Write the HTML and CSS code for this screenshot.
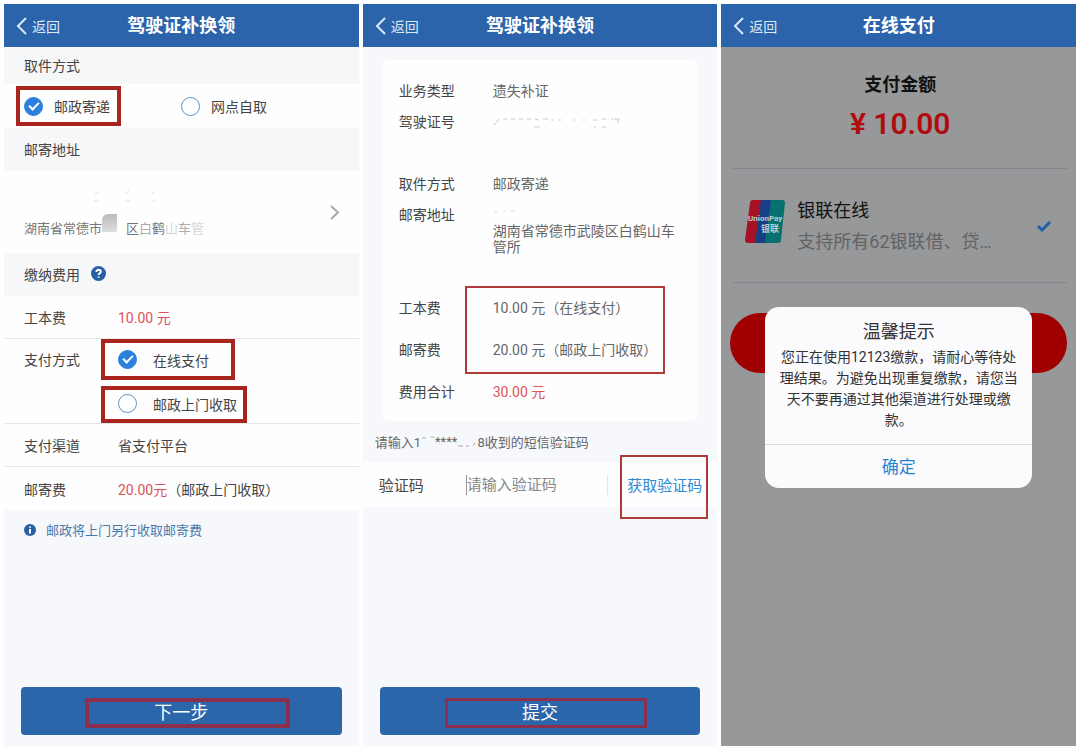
FILE: index.html
```html
<!DOCTYPE html>
<html lang="zh-CN">
<head>
    <meta charset="UTF-8">
    <meta name="viewport" content="width=device-width, initial-scale=1.0">
    <title>驾驶证补换领</title>
    <link rel="stylesheet" href="styles.css">
</head>
<body>
    <main class="screens">

        <!-- 第一步：取件方式与费用 -->
        <section class="screen">
            <header class="topbar">
                <a class="back" href="#">
                    <svg class="back-icon" viewBox="0 0 11 18"><path d="M10 1 2 9l8 8"/></svg>返回
                </a>
                <h1>驾驶证补换领</h1>
            </header>
            <h2 class="group-title first">取件方式</h2>
            <div class="pickup">
                <label class="option marked">
                    <input type="radio" name="pickup" checked>邮政寄递
                </label>
                <label class="option">
                    <input type="radio" name="pickup">网点自取
                </label>
            </div>
            <h2 class="group-title">邮寄地址</h2>
            <a class="address" href="#">
                <span class="address-text">
                    <svg class="hidden-name" viewBox="0 0 150 20">
                        <path d="M71 6h4M70 14h5M102 6l3-2M101 14h5M128 6h2M129 14h2M2 13h1"/>
                    </svg>
                    <span class="address-line">湖南省常德市<i class="smudge"></i>区<span class="faint">白</span>鹤<span class="fainter">山</span><span class="faint">车</span><span class="fainter">管</span></span>
                </span>
                <svg class="arrow" viewBox="0 0 9 15"><path d="M1 1l7 6.500-7 6.500"/></svg>
            </a>
            <h2 class="group-title">缴纳费用
                <svg class="help-icon" viewBox="0 0 15 15">
                    <circle cx="7.500" cy="7.500" r="7.500"/>
                    <path d="M5.400 6c0-1.300.9-2.200 2.200-2.200S9.800 4.600 9.800 5.700c0 1.500-2.200 1.600-2.200 3.300M7.600 10.400v1.400"/>
                </svg>
            </h2>
            <div class="row">
                <span>工本费</span>
                <span class="price">10.00 元</span>
            </div>
            <div class="row pay-row">
                <span class="pay-label">支付方式</span>
                <div class="pay-options">
                    <label class="option marked wide">
                        <input type="radio" name="pay" checked>在线支付
                    </label>
                    <label class="option marked">
                        <input type="radio" name="pay">邮政上门收取
                    </label>
                </div>
            </div>
            <div class="row">
                <span>支付渠道</span>
                <span>省支付平台</span>
            </div>
            <div class="row last">
                <span>邮寄费</span>
                <span><span class="price">20.00元</span>（邮政上门收取）</span>
            </div>
            <p class="note">
                <svg class="info-icon" viewBox="0 0 12 12">
                    <circle cx="6" cy="6" r="6"/>
                    <path d="M6 2.500v1.300M6 5v4.500"/>
                </svg>邮政将上门另行收取邮寄费
            </p>
            <button class="submit" type="button"><span class="frame thick">下一步</span></button>
        </section>

        <!-- 第二步：确认并提交 -->
        <section class="screen">
            <header class="topbar">
                <a class="back" href="#">
                    <svg class="back-icon" viewBox="0 0 11 18"><path d="M10 1 2 9l8 8"/></svg>返回
                </a>
                <h1>驾驶证补换领</h1>
            </header>
            <div class="card">
                <dl class="info">
                    <dt>业务类型</dt>
                    <dd>遗失补证</dd>
                    <dt>驾驶证号</dt>
                    <dd>
                        <svg class="hidden-id" viewBox="0 0 130 14">
                            <path d="M1 9l5-6M10 3h4M18 3h4M26 3h4M34 3h4M42 3l4 1M41 11h6M50 3h5M58 4h3M66 4h2M80 4h2M90 4h2M100 4h4M101 11h2M109 3h4M109 11h4M118 3h2M121 3h5l-2 4"/>
                        </svg>
                    </dd>
                </dl>
                <dl class="info">
                    <dt>取件方式</dt>
                    <dd>邮政寄递</dd>
                    <dt>邮寄地址</dt>
                    <dd class="multi">
                        <svg class="hidden-line" viewBox="0 0 130 16">
                            <path d="M1 5h4M10 4h3M18 4h4M1 13h1"/>
                        </svg>
                        湖南省常德市武陵区白鹤山车管所
                    </dd>
                </dl>
                <dl class="info fees">
                    <dt>工本费</dt>
                    <dd>10.00 元（在线支付）</dd>
                    <dt>邮寄费</dt>
                    <dd>20.00 元（邮政上门收取）</dd>
                    <dt>费用合计</dt>
                    <dd class="price">30.00 元</dd>
                </dl>
            </div>
            <p class="sms-hint">请输入1<svg class="hidden-left" viewBox="0 0 14 12"><path d="M1 3l2-2 2 2M10 1h3"/></svg>****<svg class="hidden-right" viewBox="0 0 20 12"><path d="M1 10h5M9 10h3M16 10l2-3"/></svg>8收到的短信验证码</p>
            <div class="code-row">
                <label for="code">验证码</label>
                <input type="text" id="code" placeholder="请输入验证码">
                <button class="get-code" type="button">获取验证码</button>
            </div>
            <button class="submit" type="button"><span class="frame">提交</span></button>
        </section>

        <!-- 第三步：在线支付 -->
        <section class="screen dimmed">
            <header class="topbar">
                <a class="back" href="#">
                    <svg class="back-icon" viewBox="0 0 11 18"><path d="M10 1 2 9l8 8"/></svg>返回
                </a>
                <h1>在线支付</h1>
            </header>
            <div class="amount">
                <h2>支付金额</h2>
                <strong>¥ 10.00</strong>
            </div>
            <div class="channel">
                <svg class="unionpay" viewBox="0 0 40 43">
                    <path fill="#a51226" d="M8 0h10l-6 43H3q-3 0-3-3L5 3q0-3 3-3z"/>
                    <path fill="#173f86" d="M16 0h12l-6 43H10z"/>
                    <path fill="#08706f" d="M26 0h11q3 0 3 3l-4 37q0 3-3 3H20z"/>
                    <text x="3" y="21" font-size="8">UnionPay</text>
                    <text x="16" y="32" font-size="9">银联</text>
                </svg>
                <div class="channel-text">
                    <div class="channel-name">银联在线</div>
                    <div class="channel-desc">支持所有62银联借、贷…</div>
                </div>
                <svg class="tick" viewBox="0 0 14 12"><path d="M1 6l4 4 8-8"/></svg>
            </div>
            <button class="pay-button" type="button" aria-label="支付"></button>

            <div class="dialog" role="dialog" aria-labelledby="dialogTitle">
                <h2 id="dialogTitle">温馨提示</h2>
                <p>您正在使用12123缴款，请耐心等待处理结果。为避免出现重复缴款，请您当天不要再通过其他渠道进行处理或缴款。</p>
                <button type="button">确定</button>
            </div>
        </section>

    </main>
</body>
</html>
```
FILE: styles.css
```css
*, *::before, *::after {
    box-sizing: border-box;
}
body {
    margin: 0;
    background-color: #fefefe;
    color: #444;
    font-family: Roboto, "Noto Sans CJK SC", sans-serif;
    font-size: 14px;
}
h1, h2, p, dl, dd {
    margin: 0;
}
a {
    color: inherit;
    text-decoration: none;
}
button, input {
    font-family: inherit;
}
svg {
    flex: none;
    fill: none;
}
.screens {
    display: grid;
    grid-template-columns: repeat(3, 1fr);
    gap: 4px;
    min-height: 100vh;
    padding: 4px;
}
.screen {
    position: relative;
    display: flex;
    flex-direction: column;
    background-color: #f6f8fb;
}

/* 顶部栏 */
.topbar {
    display: grid;
    grid-template-columns: 1fr auto 1fr;
    align-items: center;
    height: 43px;
    padding: 0 12px;
    background-color: #2b64aa;
    color: #fff;
}
.topbar h1 {
    font-size: 18px;
    line-height: 24px;
    font-weight: bold;
}
.back {
    display: flex;
    align-items: center;
    gap: 5px;
    color: #dbe8f8;
}
.back-icon {
    width: 11px;
    height: 18px;
    stroke: #dbe8f8;
    stroke-width: 2;
}

/* 第一步 */
.group-title {
    display: flex;
    align-items: center;
    gap: 11px;
    height: 43px;
    padding: 0 20px 2px;
    background-color: #f6f7f9;
    font-size: 14px;
    font-weight: normal;
}
.group-title.first {
    height: 37px;
}
.help-icon {
    width: 15px;
    height: 15px;
}
.help-icon circle, .info-icon circle {
    fill: #2760a5;
}
.help-icon path, .info-icon path {
    stroke: #fff;
    stroke-width: 2;
}
.option {
    display: flex;
    align-items: center;
    gap: 11px;
    white-space: nowrap;
}
.option input {
    appearance: none;
    display: grid;
    place-items: center;
    flex: none;
    width: 19px;
    height: 19px;
    margin: 0;
    border: 1px solid #5f93c4;
    border-radius: 50%;
    background-color: #fff;
}
.option input:checked {
    border-color: #2a80dc;
    background-color: #2a80dc;
}
.option input:checked::after {
    content: "";
    width: 10px;
    height: 6px;
    margin-bottom: 3px;
    border: solid #fff;
    border-width: 0 0 2px 2px;
    transform: rotate(-45deg);
}
.option.marked {
    border: 4px solid #a8241f;
}
.pickup {
    display: flex;
    gap: 60px;
    height: 44px;
    padding: 2px 12px;
    background-color: #fefefe;
}
.pickup .marked {
    padding: 0 7px 0 4px;
}
.address {
    display: flex;
    align-items: center;
    justify-content: space-between;
    height: 82px;
    padding: 0 20px;
    background-color: #fefefe;
    color: #777;
    font-size: 13px;
}
.address-text {
    display: flex;
    flex-direction: column;
    gap: 10px;
}
.address-line {
    display: flex;
    align-items: center;
    height: 20px;
}
.hidden-name {
    width: 150px;
    height: 20px;
    stroke: #ddd;
}
.smudge {
    width: 15px;
    height: 18px;
    margin: 0 9px 8px 0;
    border-radius: 6px 0 2px 0;
    background: linear-gradient(#bbb, #ddd);
}
.faint {
    opacity: 0.6;
}
.fainter {
    opacity: 0.3;
}
.arrow {
    width: 9px;
    height: 15px;
    stroke: #aaa;
    stroke-width: 2;
}
.row {
    display: grid;
    grid-template-columns: 94px 1fr;
    align-items: center;
    min-height: 43px;
    padding: 0 20px;
    border-bottom: 1px solid #e6e7e9;
    background-color: #fefefe;
}
.row.last {
    border-bottom: none;
}
.price {
    color: #dc5258;
}
.pay-row {
    align-items: start;
}
.pay-label {
    line-height: 43px;
}
.pay-options {
    display: flex;
    flex-direction: column;
    align-items: flex-start;
    gap: 6px;
    margin-left: -17px;
}
.pay-options .option {
    gap: 16px;
    height: 37px;
    padding: 0 6px 2px 13px;
}
.pay-options .wide {
    height: 41px;
    padding-right: 22px;
    padding-bottom: 0;
}
.note {
    display: flex;
    align-items: center;
    gap: 10px;
    height: 39px;
    padding: 0 20px;
    color: #4878ad;
    font-size: 13px;
}
.info-icon {
    width: 12px;
    height: 12px;
}
.submit {
    display: flex;
    align-items: center;
    justify-content: center;
    height: 48px;
    margin: auto 17px 11px;
    padding: 4px 0 0;
    border: none;
    border-radius: 4px;
    background-color: #2b65aa;
    color: #fff;
    font-size: 18px;
    cursor: pointer;
}
.frame {
    width: 202px;
    margin-left: 12px;
    padding-right: 12px;
    border: 3px solid #8b2f4c;
    line-height: 24px;
}
.frame.thick {
    width: 205px;
    border-width: 4px;
    line-height: 22px;
}

/* 第二步 */
.card {
    display: flex;
    flex-direction: column;
    gap: 31px;
    margin: 13px 19px 5px;
    padding: 16px 16px 8px 17px;
    border-radius: 6px;
    background-color: #fefefe;
}
.info {
    display: grid;
    grid-template-columns: 94px 1fr;
    line-height: 31px;
}
.info dd {
    color: #666;
}
.info dd.price {
    color: #dc5258;
}
.info .multi {
    padding-top: 7px;
    line-height: 16px;
}
.hidden-id {
    width: 130px;
    height: 14px;
    stroke: #ccc;
    vertical-align: middle;
}
.hidden-line {
    display: block;
    width: 130px;
    height: 16px;
    stroke: #ddd;
}
.fees {
    position: relative;
    padding-top: 1px;
    line-height: 42px;
}
.fees::after {
    content: "";
    position: absolute;
    top: 0;
    left: 66px;
    width: 200px;
    height: 88px;
    border: 2px solid #b03a38;
}
.sms-hint {
    display: flex;
    align-items: center;
    height: 36px;
    padding: 0 12px 5px;
    color: #666;
    font-size: 13px;
}
.hidden-left, .hidden-right {
    width: 14px;
    height: 12px;
    stroke: #aaa;
}
.hidden-right {
    width: 20px;
}
.code-row {
    display: grid;
    grid-template-columns: 87px 1fr auto;
    align-items: center;
    height: 45px;
    padding: 0 15px 0 16px;
    background-color: #fefefe;
    font-size: 15px;
}
.code-row input {
    width: 100%;
    min-width: 0;
    height: 20px;
    padding: 0;
    border: solid #e4e4e4;
    border-width: 0 1px 0 1px;
    border-left-color: #999;
    background: none;
    font-size: 15px;
}
.code-row input::placeholder {
    color: #888;
}
.get-code {
    position: relative;
    margin-left: 19px;
    padding: 0;
    border: none;
    background: none;
    color: #2f8ad3;
    font-size: 15px;
    cursor: pointer;
}
.get-code::after {
    content: "";
    position: absolute;
    inset: -19px -6px -24px -7px;
    border: 2px solid #b03a38;
}

/* 第三步 */
.dimmed {
    background-color: #979899;
    color: #111;
}
.amount {
    display: flex;
    flex-direction: column;
    align-items: center;
    gap: 9px;
    height: 122px;
    margin: 0 9px 0 12px;
    padding-top: 26px;
    border-bottom: 1px solid #85868a;
}
.amount h2 {
    font-size: 18px;
    line-height: 24px;
}
.amount strong {
    color: #b00c10;
    font-size: 30px;
    font-weight: 600;
    line-height: 36px;
}
.channel {
    display: flex;
    align-items: center;
    gap: 12px;
    height: 114px;
    margin: 0 9px 0 12px;
    padding: 0 16px 0 12px;
    border-bottom: 1px solid #85868a;
    font-size: 18px;
}
.unionpay {
    width: 40px;
    height: 43px;
    margin-bottom: 8px;
}
.unionpay text {
    fill: #b9cdd2;
    font-weight: bold;
}
.channel-text {
    flex: 1;
    line-height: 31px;
    white-space: nowrap;
}
.channel-desc {
    color: #626365;
}
.tick {
    width: 14px;
    height: 12px;
    stroke: #1f5fae;
    stroke-width: 3;
}
.pay-button {
    height: 60px;
    margin: 30px 9px 0;
    border: none;
    border-radius: 30px;
    background-color: #a00000;
}
.dialog {
    position: absolute;
    top: 303px;
    left: 44px;
    right: 44px;
    overflow: hidden;
    border-radius: 14px;
    background-color: #fbfafc;
    color: #333;
    text-align: center;
}
.dialog h2 {
    padding-top: 12px;
    font-size: 18px;
    line-height: 26px;
    font-weight: normal;
}
.dialog p {
    padding: 2px 12px 13px;
    line-height: 21px;
}
.dialog button {
    width: 100%;
    height: 44px;
    padding: 0 0 3px;
    border: none;
    border-top: 1px solid #dddde0;
    background: none;
    color: #1f86d6;
    font-size: 17px;
    cursor: pointer;
}
```
